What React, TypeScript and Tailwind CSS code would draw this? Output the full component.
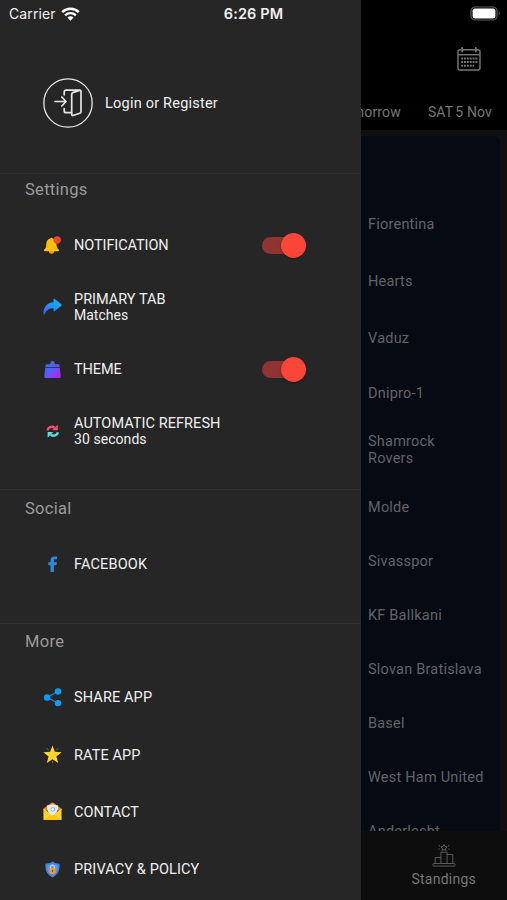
import React from "react";

interface IconProps {
  className?: string;
}

const WifiIcon: React.FC<IconProps> = ({ className }) => (
  <svg className={className} viewBox="0 0 19 14" fill="none">
    <path d="M1.2 5.2a12 12 0 0 1 16.6 0" stroke="#fff" strokeWidth="2.5" />
    <path d="M4.1 8.3a7.8 7.8 0 0 1 10.8 0" stroke="#fff" strokeWidth="2.3" />
    <path d="M9.5 13.8 6.4 10.6a4.4 4.4 0 0 1 6.2 0z" fill="#fff" />
  </svg>
);

const BatteryIcon: React.FC<IconProps> = ({ className }) => (
  <svg className={className} viewBox="0 0 31 15" fill="none">
    <rect x="1" y="1" width="26" height="13" rx="4" stroke="#5c5c5c" strokeWidth="1.2" />
    <rect x="2.6" y="2.6" width="22.8" height="9.8" rx="2.6" fill="#fff" />
    <path d="M28.6 5.2c1.6.8 1.6 3.8 0 4.6z" fill="#5c5c5c" />
  </svg>
);

const LoginIcon: React.FC<IconProps> = ({ className }) => (
  <svg className={className} viewBox="0 0 50 50" fill="none" stroke="#e6e6e6">
    <circle cx="25" cy="25" r="24.2" strokeWidth="1.3" />
    <g strokeWidth="1.7" strokeLinecap="round" strokeLinejoin="round">
      <path d="M12 23.5h10.5M18.8 19l4.2 4.5-4.2 4.5" />
      <path d="M21.2 16.8v-2.6a2 2 0 0 1 2-2h13.6a1.3 1.3 0 0 1 1.2 1.3v20.3a1.5 1.5 0 0 1-1.2 1.4L30 37.5a1 1 0 0 1-1.3-1V16.2a1.7 1.7 0 0 1 1.1-1.6l6.8-2.2" />
      <path d="M21.2 30.5v2.2a2 2 0 0 0 2 2h5.2" />
    </g>
  </svg>
);

const CalendarIcon: React.FC<IconProps> = ({ className }) => (
  <svg className={className} viewBox="0 0 24 24" fill="none" stroke="#777" strokeWidth="1.4">
    <rect x="1" y="2.8" width="22" height="20.2" rx="2" />
    <path d="M1 7.7h22" />
    <path d="M5.2.9v3.7M18.8.9v3.7" strokeWidth="1.8" strokeLinecap="round" />
    <path d="M4.2 11.5h16.2M4.2 15h16.2M4.2 18.7h12.8" strokeWidth="1.9" strokeDasharray="1.9 .95" />
  </svg>
);

const PodiumIcon: React.FC<IconProps> = ({ className }) => (
  <svg className={className} viewBox="0 0 24 24" fill="none" stroke="#5a5a5a" strokeWidth="1">
    <rect x="1" y="20.5" width="22" height="2.6" rx=".8" />
    <path d="M3.2 20.5v-6h5.7M8.9 20.5V9.2h6.2v11.3M15.1 11.5h5.7v9" />
    <path d="m12 1.5 1 2 2.2.3-1.6 1.5.4 2.2-2-1-2 1 .4-2.2-1.6-1.5 2.200-.3z" />
    <path d="M6.8 2.2 8 3.2M6.3 6.3l1.4-.5M17.2 2.2 16 3.2M17.7 6.3l-1.4-.5" />
  </svg>
);

const BellIcon: React.FC<IconProps> = ({ className }) => (
  <svg className={className} viewBox="0 0 20 20">
    <path d="M7.6 2.6a1.4 1.4 0 0 1 2.6 0c2.8.8 4 3 4 5.8 0 3.2.9 4.6 2.3 5.9.8.9.3 1.7-.6 1.7H2c-1 0-1.4-.9-.7-1.7 1.5-1.3 2.2-2.7 2.2-5.9 0-2.800 1.400-5 4.100-5.800z" fill="#ffc107" />
    <path d="M6.2 15.900h5.600a2.800 2.800 0 0 1-5.600 0z" fill="#ffa000" />
    <circle cx="14.9" cy="4.2" r="3.9" fill="#f44336" />
  </svg>
);

const ForwardIcon: React.FC<IconProps> = ({ className }) => (
  <svg className={className} viewBox="0 0 20 20">
    <defs>
      <linearGradient id="forward" x1="1" y1="0" x2="0" y2="1">
        <stop offset=".1" stopColor="#08b8fa" />
        <stop offset=".55" stopColor="#258cf7" />
        <stop offset="1" stopColor="#5555e8" />
      </linearGradient>
    </defs>
    <path d="M11.1 1.700c0-.8.700-1.100 1.300-.6l6.800 5.600c.6.500.6 1 0 1.500l-6.800 5.600c-.6.500-1.300.1-1.300-.6v-2.500c-4.600 0-7.500 1.700-9.400 6.500-.3.800-1.200.6-1.200-.2-.3-7.800 3.800-12.100 10.600-12.600z" fill="url(#forward)" />
  </svg>
);

const BrushIcon: React.FC<IconProps> = ({ className }) => (
  <svg className={className} viewBox="0 0 20 20">
    <defs>
      <linearGradient id="brush" x1="0" y1="0" x2="1" y2="1">
        <stop offset=".15" stopColor="#2878f5" />
        <stop offset=".55" stopColor="#6953f6" />
        <stop offset="1" stopColor="#c31bea" />
      </linearGradient>
    </defs>
    <path d="M10 1a2.300 2.300 0 0 1 2.300 2.300v1.200H16c.9 0 1.300.5 1.400 1.100l.2 1.900H2.400l.2-1.900c.1-.7.600-1.100 1.400-1.100h3.700V3.300A2.300 2.300 0 0 1 10 1zM2.300 8.500h15.400l.9 8.900c.1.900-.4 1.500-1.200 1.500H2.600c-.9 0-1.300-.6-1.200-1.500z" fill="url(#brush)" />
  </svg>
);

const RefreshIcon: React.FC<IconProps> = ({ className }) => (
  <svg className={className} viewBox="0 0 20 20" fill="none" strokeWidth="2.7">
    <path d="M4.800 8.800c.4-3.200 4.400-5 7.400-2.700" stroke="#f8506a" />
    <path d="M15.500 2.800v6H9.700z" fill="#f8506a" />
    <path d="M15.600 10.900c-.4 3-4.400 4.700-7.400 2.500" stroke="#5de0e8" />
    <path d="M4.900 16.500v-6h5.800z" fill="#5de0e8" />
  </svg>
);

const FacebookIcon: React.FC<IconProps> = ({ className }) => (
  <svg className={className} viewBox="0 0 20 20">
    <path d="M7.900 18v-7.200H5.500V7.600h2.400V5.500c0-2.700 1.600-4 4-4h2.900v3h-2c-1 0-1.300.5-1.300 1.300v1.800h3.200l-.5 3.200h-2.700V18z" fill="#2e88dd" />
  </svg>
);

const ShareIcon: React.FC<IconProps> = ({ className }) => (
  <svg className={className} viewBox="0 0 20 20">
    <path d="m15.700 3.700-11.300 6.400 11.300 5.800" fill="none" stroke="#0a8fe0" strokeWidth="1.2" />
    <g fill="#05a0f5">
      <circle cx="15.8" cy="3.7" r="3.4" />
      <circle cx="4.3" cy="10.1" r="3.4" />
      <circle cx="15.8" cy="15.9" r="3.4" />
    </g>
  </svg>
);

const StarIcon: React.FC<IconProps> = ({ className }) => (
  <svg className={className} viewBox="0 0 20 20">
    <path d="m10 .6 2.500 6.600 7.100.3-5.500 4.500 1.900 7-6-3.900-6 3.900 1.900-7L.4 7.500l7.100-.3z" fill="#ffd32a" />
    <path d="m4.200 3.300 1.600 2M15.800 3.300l-1.600 2M10 16.900v2.200" stroke="#91701b" strokeWidth=".9" />
  </svg>
);

const MailIcon: React.FC<IconProps> = ({ className }) => (
  <svg className={className} viewBox="0 0 20 20">
    <path d="M.5 7 8.600 1a2.300 2.300 0 0 1 2.800 0l8.100 6v2H.5z" fill="#ed8b16" />
    <path d="M.5 6.900 10 14l9.500-7.100V19H.5z" fill="#ffd52d" />
    <path d="M.5 19 10 12l9.500 7z" fill="#fdc70f" />
    <path d="M10 2.200c2.100 1.100 4.100 1.500 6 1.500 0 5-1.500 8.200-6 10.700-4.500-2.500-6-5.700-6-10.700 1.900 0 3.900-.4 6-1.500z" fill="#e4eaf0" />
    <circle cx="10.3" cy="7.7" r="2" fill="none" stroke="#9bb3c4" strokeWidth="1" />
    <path d="M12.300 6v3.400" stroke="#9bb3c4" strokeWidth=".8" />
  </svg>
);

const ShieldIcon: React.FC<IconProps> = ({ className }) => (
  <svg className={className} viewBox="0 0 20 20">
    <path d="M10 1.700c2.200 1.700 4.600 2.300 7.500 2.300 0 7.500-1.500 11.400-7.500 14.300C4 15.400 2.500 11.500 2.500 4c2.900 0 5.300-.6 7.500-2.300z" fill="#4285e8" />
    <path d="M10 4c1.600 1.200 3.400 1.600 5.400 1.600 0 5.500-1.100 8.300-5.400 10.700-4.300-2.400-5.400-5.200-5.400-10.700 2 0 3.800-.4 5.400-1.600z" fill="#5a9aee" />
    <path d="M8 10V7.300a2 2 0 0 1 4 0V10" fill="none" stroke="#d6dde5" strokeWidth="1.2" />
    <rect x="6.8" y="8.8" width="6.4" height="5.6" rx=".7" fill="#f29a2e" />
    <path d="M10 10.600v2" stroke="#6a4934" strokeWidth="1.2" />
  </svg>
);

const Switch = () => (
  <div
    role="switch"
    aria-checked="true"
    className="flex h-[17px] w-[44px] items-center justify-end rounded-full bg-[#8f3431]"
  >
    <div className="size-[25px] shrink-0 rounded-full bg-[#fb4538] shadow-[0_1px_2px_rgba(0,0,0,0.4)]" />
  </div>
);

interface MenuRowProps {
  icon: React.FC<IconProps>;
  label: string;
  value?: string;
  toggle?: boolean;
  className: string;
}

const MenuRow: React.FC<MenuRowProps> = ({ icon: Icon, label, value, toggle, className }) => (
  <div className={`flex shrink-0 items-center pl-[43px] pr-[55px] ${className}`}>
    <Icon className="mr-3 size-[19px] shrink-0" />
    <div className="flex-1 whitespace-nowrap pt-[2px] text-[14.5px] leading-4 text-[#f0f0f0]">
      <p>{label}</p>
      {value && <p className="-mt-px pb-px text-[14px]">{value}</p>}
    </div>
    {toggle && <Switch />}
  </div>
);

const SectionTitle: React.FC<{ children: React.ReactNode }> = ({ children }) => (
  <h2 className="h-8 pl-[25px] text-[16.5px] leading-8 tracking-[0.3px] text-[#9b9b9b]">{children}</h2>
);

const teams = [
  { name: "Fiorentina", height: "h-[57px]" },
  { name: "Hearts", height: "h-[57px]" },
  { name: "Vaduz", height: "h-[56px]" },
  { name: "Dnipro-1", height: "h-[54px]" },
  { name: "Shamrock Rovers", height: "h-[60px]" },
  { name: "Molde", height: "h-[55px]" },
  { name: "Sivasspor", height: "h-[53px]" },
  { name: "KF Ballkani", height: "h-[54px]" },
  { name: "Slovan Bratislava", height: "h-[54px]" },
  { name: "Basel", height: "h-[54px]" },
  { name: "West Ham United", height: "h-[54px]" },
  { name: "Anderlecht", height: "h-[54px]" },
];

const MatchesPage = () => (
  <div className="flex h-full flex-col bg-[#101010]">
    <header className="flex h-[130px] shrink-0 flex-col bg-black pt-[47px]">
      <CalendarIcon className="mr-[26px] size-6 self-end" />
      <div className="mt-[31px] flex justify-end pr-[15px] text-[14px] leading-5 tracking-[0.15px] text-[#777]">
        <span className="mr-[27px]">Tomorrow</span>
        <span>SAT</span>
        <span className="ml-[2px]">5 Nov</span>
      </div>
    </header>
    <main className="mr-[7px] mt-[6px] min-h-0 flex-1 overflow-hidden rounded-t-md bg-[#060a13] pl-[368px]">
      <div className="h-[60px]" />
      {teams.map((team) => (
        <div key={team.name} className={`flex items-center ${team.height}`}>
          <p
            className={`text-[14.5px] leading-[17px] tracking-[0.22px] text-[#626469] ${
              team.name === "Shamrock Rovers" ? "w-20" : "whitespace-nowrap"
            }`}
          >
            {team.name}
          </p>
        </div>
      ))}
    </main>
    <nav className="flex h-[69px] shrink-0 justify-end bg-[#0d0d0d] pr-[31px] pt-3">
      <div className="flex flex-col items-center text-[14px] leading-5 text-[#777]">
        <PodiumIcon className="mb-[2px] size-6" />
        <span className="tracking-[0.25px]">Standings</span>
      </div>
    </nav>
  </div>
);

const Drawer = () => (
  <aside className="absolute inset-y-0 left-0 flex w-[361px] flex-col overflow-hidden bg-[#262627]">
    <div className="flex h-[174px] shrink-0 items-center border-b border-[#2d2d2e] pl-[43px] pt-[33px]">
      <LoginIcon className="mr-3 size-[50px]" />
      <span className="pt-[2px] text-[14.5px] tracking-[0.22px] text-[#f0f0f0]">Login or Register</span>
    </div>
    <section className="flex h-[316px] shrink-0 flex-col border-b border-[#303031]">
      <SectionTitle>Settings</SectionTitle>
      <div className="mt-2">
        <MenuRow icon={BellIcon} label="NOTIFICATION" toggle className="h-[62px] tracking-[-0.08px]" />
        <MenuRow icon={ForwardIcon} label="PRIMARY TAB" value="Matches" className="h-[62px]" />
        <MenuRow icon={BrushIcon} label="THEME" toggle className="h-[62px] tracking-[-0.08px]" />
        <MenuRow
          icon={RefreshIcon}
          label="AUTOMATIC REFRESH"
          value="30 seconds"
          className="h-[62px] tracking-[0.06px]"
        />
      </div>
    </section>
    <section className="flex h-[134px] shrink-0 flex-col border-b border-[#303031] pt-[3px]">
      <SectionTitle>Social</SectionTitle>
      <MenuRow icon={FacebookIcon} label="FACEBOOK" className="mt-2 h-[62px] tracking-[0.15px]" />
    </section>
    <section className="pt-[2px]">
      <SectionTitle>More</SectionTitle>
      <div className="mt-[10px]">
        <MenuRow icon={ShareIcon} label="SHARE APP" className="h-[58px] tracking-[0.12px]" />
        <MenuRow icon={StarIcon} label="RATE APP" className="h-[57px] tracking-[0.1px]" />
        <MenuRow icon={MailIcon} label="CONTACT" className="h-[57px]" />
        <MenuRow icon={ShieldIcon} label="PRIVACY & POLICY" className="h-[58px] tracking-[0.12px]" />
      </div>
    </section>
  </aside>
);

const StatusBar = () => (
  <div className="absolute inset-x-0 top-0 grid h-[27px] grid-cols-3 items-center px-[9px] font-[Inter,sans-serif] text-[14px] text-[#f0f0f0]">
    <div className="flex items-center gap-[5px]">
      <span className="tracking-[0.1px]">Carrier</span>
      <WifiIcon className="h-[14px] w-[19px]" />
    </div>
    <span className="text-center text-[14.5px] font-semibold tracking-[0.1px]">6:26 PM</span>
    <BatteryIcon className="-mr-[3px] h-[15px] w-[31px] justify-self-end" />
  </div>
);

export default function App() {
  return (
    <div className="relative h-[900px] w-[507px] overflow-hidden bg-black font-[Roboto,sans-serif]">
      <MatchesPage />
      <Drawer />
      <StatusBar />
    </div>
  );
}
